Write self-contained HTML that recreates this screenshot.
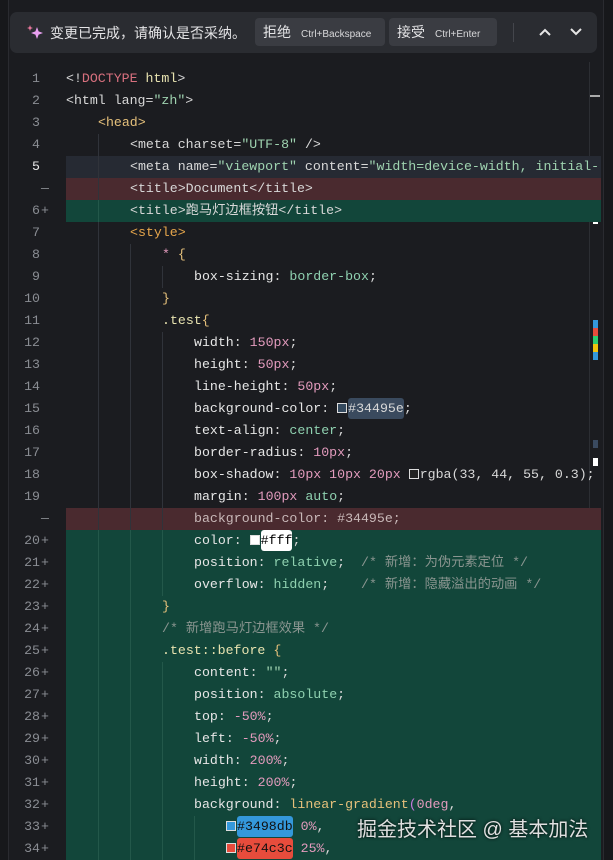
<!DOCTYPE html>
<html><head><meta charset="utf-8"><style>
*{margin:0;padding:0;box-sizing:border-box}
body{width:613px;height:860px;background:#17181b;overflow:hidden;position:relative;font-family:"Liberation Mono","Noto Sans CJK SC",monospace}
.panel{position:absolute;left:8px;top:0;width:596px;height:860px;background:#1b1c20;border-left:1px solid #2a2b30;border-right:1px solid #2a2b30}
.tb{position:absolute;left:10px;top:12px;width:587px;height:41px;background:#2a2c31;border-radius:7px;font-family:"Liberation Sans","Noto Sans CJK SC",sans-serif;color:#e4e4e6}
.tb .msg{position:absolute;left:40px;top:11px;font-size:14px}
.btn{position:absolute;top:6px;height:28px;background:#3a3c42;border-radius:4px;font-size:14px;line-height:28px;padding-left:8px}
.btn small{font-size:10px;margin-left:10px;color:#d8d8da}
.row{position:absolute;left:8px;width:593px;height:22px;line-height:22px;font-size:13.25px;color:#d8d8d8;white-space:pre}
.ln{position:absolute;left:0;width:32px;text-align:right;color:#8a8d93}
.mk{position:absolute;left:33px;color:#8a8d93}
.code{position:absolute;left:58px;top:0;right:0;height:22px}
.del .code{background:#4a2a2f}
.add .code{background:#12463a}
.cur .code{background:#262a33}
.cur .ln{color:#e8e8e8}
.s{color:#9fd3b0}.p{color:#e6e6e6}.v{color:#8fd1b0}.n{color:#e39bbd}.o{color:#e5a54b}.y{color:#e5c07b}.r{color:#d8707e}.c{color:#8a9590}.k{color:#e8e3b0}
.sw{display:inline-block;width:10px;height:10px;border:1px solid #ddd;vertical-align:-1px;margin-right:1px}
.g{position:absolute;top:0;height:22px;border-left:1px solid #30333a}
.add .g{border-left-color:#23584a}
</style></head><body>
<div class="panel"></div>
<div class="tb">
<svg style="position:absolute;left:16px;top:12px" width="18" height="18" viewBox="0 0 18 18"><path d="M11 3 L12.6 7.4 L17 9 L12.6 10.6 L11 15 L9.4 10.6 L5 9 L9.4 7.4Z" fill="#e8a0f0"/><path d="M4 1 L4.8 3.2 L7 4 L4.8 4.8 L4 7 L3.2 4.8 L1 4 L3.2 3.2Z" fill="#f07aa0"/></svg>
<div class="msg">变更已完成，请确认是否采纳。</div>
<div class="btn" style="left:245px;width:130px">拒绝<small>Ctrl+Backspace</small></div>
<div class="btn" style="left:379px;width:108px">接受<small>Ctrl+Enter</small></div>
<div style="position:absolute;left:503px;top:11px;width:1px;height:19px;background:#44464c"></div>
<svg style="position:absolute;left:528px;top:14px" width="14" height="12" viewBox="0 0 14 12"><path d="M2 9 L7 4 L12 9" stroke="#e6e6e6" stroke-width="2" fill="none"/></svg>
<svg style="position:absolute;left:559px;top:14px" width="14" height="12" viewBox="0 0 14 12"><path d="M2 3 L7 8 L12 3" stroke="#e6e6e6" stroke-width="2" fill="none"/></svg>
</div>

<div style="position:absolute;left:589px;top:62px;width:1px;height:798px;background:#2c2e33"></div>
<div style="position:absolute;left:590px;top:95px;width:10px;height:2px;background:#aaa"></div>
<div style="position:absolute;left:593px;top:176px;width:4px;height:4px;background:#4a5060"></div>
<div style="position:absolute;left:593px;top:216px;width:5px;height:8px;background:#fff"></div>
<div style="position:absolute;left:593px;top:320px;width:5px;height:40px;background:linear-gradient(#3498db 0 20%,#e74c3c 20% 40%,#2ecc71 40% 60%,#f1c40f 60% 80%,#3498db 80%)"></div>
<div style="position:absolute;left:593px;top:440px;width:5px;height:8px;background:#3a4a60"></div>
<div style="position:absolute;left:593px;top:458px;width:5px;height:8px;background:#fff"></div>

<div id="rows"></div>
<div style="position:absolute;left:357px;top:813px;font-family:'Liberation Sans','Noto Sans CJK SC',sans-serif;font-size:20px;color:#e0e0e0;text-shadow:0 0 3px #000">掘金技术社区 @ 基本加法</div>
<script>
var R=[
["1","",0,"","&lt;!<span class='r'>DOCTYPE</span> <span class='k'>html</span>&gt;"],
["2","",0,"","&lt;html lang=<span class='s'>\"zh\"</span>&gt;"],
["3","",1,"","<span class='y'>&lt;head&gt;</span>"],
["4","",2,"","&lt;meta charset=<span class='s'>\"UTF-8\"</span> /&gt;"],
["5","",2,"cur","&lt;meta name=<span class='s'>\"viewport\"</span> content=<span class='s'>\"width=device-width, initial-</span>"],
["","—",2,"del","&lt;title&gt;Document&lt;/title&gt;"],
["6","+",2,"add","&lt;title&gt;跑马灯边框按钮&lt;/title&gt;"],
["7","",2,"","<span class='o'>&lt;style&gt;</span>"],
["8","",3,"","<span class='n'>*</span> <span class='y'>{</span>"],
["9","",4,"","<span class='p'>box-sizing</span>: <span class='v'>border-box</span>;"],
["10","",3,"","<span class='y'>}</span>"],
["11","",3,"","<span class='k'>.test</span><span class='y'>{</span>"],
["12","",4,"","<span class='p'>width</span>: <span class='n'>150px</span>;"],
["13","",4,"","<span class='p'>height</span>: <span class='n'>50px</span>;"],
["14","",4,"","<span class='p'>line-height</span>: <span class='n'>50px</span>;"],
["15","",4,"","<span class='p'>background-color</span>: <span class='sw' style='background:#34495e'></span><span style='background:#3a4a5e;border-radius:3px;padding:3px 0'>#34495e</span>;"],
["16","",4,"","<span class='p'>text-align</span>: <span class='v'>center</span>;"],
["17","",4,"","<span class='p'>border-radius</span>: <span class='n'>10px</span>;"],
["18","",4,"","<span class='p'>box-shadow</span>: <span class='n'>10px 10px 20px</span> <span class='sw' style='background:#222'></span>rgba(33, 44, 55, 0.3);"],
["19","",4,"","<span class='p'>margin</span>: <span class='n'>100px</span> <span class='v'>auto</span>;"],
["","—",4,"del","<span style='color:#c8b8b8'>background-color: #34495e;</span>"],
["20","+",4,"add","<span class='p'>color</span>: <span class='sw' style='background:#fff'></span><span style='background:#fff;color:#000;border-radius:3px;padding:3px 0'>#fff</span>;"],
["21","+",4,"add","<span class='p'>position</span>: <span class='v'>relative</span>;  <span class='c'>/* 新增：为伪元素定位 */</span>"],
["22","+",4,"add","<span class='p'>overflow</span>: <span class='v'>hidden</span>;    <span class='c'>/* 新增：隐藏溢出的动画 */</span>"],
["23","+",3,"add","<span class='y'>}</span>"],
["24","+",3,"add","<span class='c'>/* 新增跑马灯边框效果 */</span>"],
["25","+",3,"add","<span class='k'>.test::before</span> <span class='y'>{</span>"],
["26","+",4,"add","<span class='p'>content</span>: <span class='s'>\"\"</span>;"],
["27","+",4,"add","<span class='p'>position</span>: <span class='v'>absolute</span>;"],
["28","+",4,"add","<span class='p'>top</span>: <span class='n'>-50%</span>;"],
["29","+",4,"add","<span class='p'>left</span>: <span class='n'>-50%</span>;"],
["30","+",4,"add","<span class='p'>width</span>: <span class='n'>200%</span>;"],
["31","+",4,"add","<span class='p'>height</span>: <span class='n'>200%</span>;"],
["32","+",4,"add","<span class='p'>background</span>: <span class='y'>linear-gradient</span><span style='color:#c678dd'>(</span><span class='n'>0deg</span>,"],
["33","+",5,"add","<span class='sw' style='background:#3498db'></span><span style='background:#3498db;color:#111;border-radius:3px;padding:3px 0'>#3498db</span> <span class='n'>0%</span>,"],
["34","+",5,"add","<span class='sw' style='background:#e74c3c'></span><span style='background:#e74c3c;color:#111;border-radius:3px;padding:3px 0'>#e74c3c</span> <span class='n'>25%</span>,"]
];
var h="";
R.forEach(function(r,i){
 var g="";
 for(var k=1;k<r[2];k++){g+="<div class='g' style='left:"+(32*k)+"px'></div>";}
 h+="<div class='row "+r[3]+"' style='top:"+(68+22*i)+"px'><span class='ln'>"+r[0]+"</span><span class='mk'>"+r[1]+"</span><div class='code'>"+g+"<span style='position:absolute;left:"+(32*r[2])+"px'>"+r[4]+"</span></div></div>";
});
document.getElementById("rows").innerHTML=h;
</script>
</body></html>
